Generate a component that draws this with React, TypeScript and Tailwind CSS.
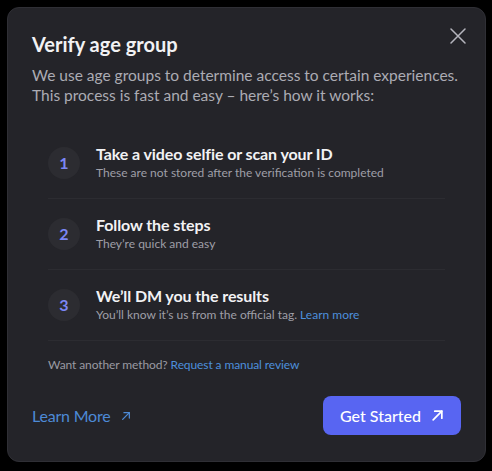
import React from "react";

function ArrowUpRight({ className, sw = 2.6 }: { className?: string; sw?: number }) {
  return (
    <svg viewBox="0 0 24 24" className={className} fill="none" stroke="currentColor" strokeWidth={sw} strokeLinecap="round" strokeLinejoin="round">
      <path d="M4 20L20 4" />
      <path d="M7 4h13v13" />
    </svg>
  );
}

const steps = [
  { n: "1", title: "Take a video selfie or scan your ID", sub: "These are not stored after the verification is completed", link: false },
  { n: "2", title: "Follow the steps", sub: "They\u2019re quick and easy", link: false },
  { n: "3", title: "We\u2019ll DM you the results", sub: "You\u2019ll know it\u2019s us from the official tag.", link: true },
];

export default function App() {
  return (
    <div
      className="w-full h-[471px] bg-black pt-[7px] pl-[7px]"
      style={{ fontFamily: 'Lato, "Noto Sans", sans-serif' }}
    >
      <div className="relative w-[479px] h-[455px] rounded-[12px] bg-[#242429] border border-[#2f2f35] px-6 pt-[22px]">
        <svg
          viewBox="0 0 16 16"
          className="absolute right-[19px] top-[20px] w-4 h-4 text-[#b5b5bd]"
          fill="none"
          stroke="currentColor"
          strokeWidth={1.5}
          strokeLinecap="round"
        >
          <path d="M1 1l14 14M15 1L1 15" />
        </svg>
        <h1 className="text-[20px] leading-[28px] font-bold text-[#f2f2f4]">Verify age group</h1>
        <p className="mt-[7px] text-[15.5px] leading-[20px] text-[#acacb4]">
          We use age groups to determine access to certain experiences.
          <br />
          This process is fast and easy &ndash; here&rsquo;s how it works:
        </p>
        <div className="mt-[23px] mx-4">
          {steps.map((s) => (
            <div key={s.n} className="h-[71px] flex items-center gap-4 border-b border-[#2c2c31]">
              <div className="w-8 h-8 shrink-0 rounded-full bg-[#2c2c31] flex items-center justify-center text-[16px] font-bold text-[#7b86f5]">
                {s.n}
              </div>
              <div className="flex flex-col">
                <div className="text-[16px] leading-[20px] font-bold text-[#f2f2f4] tracking-[-0.1px]">{s.title}</div>
                <div className="text-[12px] leading-[18px] text-[#9f9fa7]">
                  {s.sub}
                  {s.link && <span className="text-[#4d8fdc]"> Learn more</span>}
                </div>
              </div>
            </div>
          ))}
          <div className="mt-[16px] text-[12px] leading-[16px] text-[#9a9aa2] tracking-[-0.1px]">
            Want another method? <span className="text-[#4d8fdc]">Request a manual review</span>
          </div>
        </div>
        <div className="mt-[23px] flex items-center justify-between">
          <div className="flex items-center gap-[10px] text-[16px] text-[#4d8ad6] tracking-[-0.2px]">
            <span>Learn More</span>
            <ArrowUpRight className="w-[10px] h-[10px]" sw={3} />
          </div>
          <button className="w-[138px] h-[39px] rounded-[8px] bg-[#5865f2] text-white text-[16px] font-medium flex items-center justify-center gap-[10px]">
            <span>Get Started</span>
            <ArrowUpRight className="w-[13px] h-[13px]" sw={3.2} />
          </button>
        </div>
      </div>
    </div>
  );
}
